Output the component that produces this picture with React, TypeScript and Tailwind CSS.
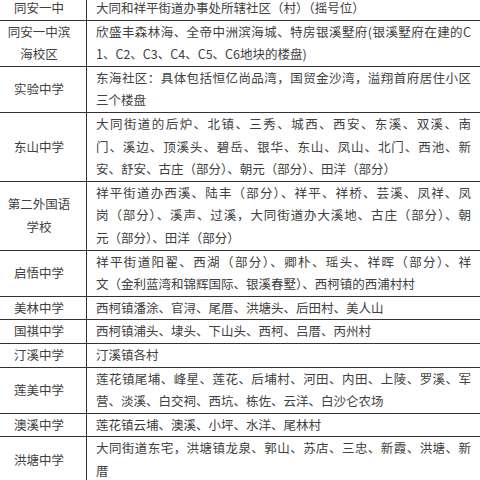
const rows: { name: string[]; lines: string[] }[] = [
  { name: ["同安一中"], lines: ["大同和祥平街道办事处所辖社区（村）（摇号位）"] },
  {
    name: ["同安一中滨", "海校区"],
    lines: ["欣盛丰森林海、全帝中洲滨海城、特房银溪墅府(银溪墅府在建的C", "1、C2、C3、C4、C5、C6地块的楼盘)"],
  },
  {
    name: ["实验中学"],
    lines: ["东海社区：具体包括恒亿尚品湾，国贸金沙湾，溢翔首府居住小区", "三个楼盘"],
  },
  {
    name: ["东山中学"],
    lines: [
      "大同街道的后炉、北镇、三秀、城西、西安、东溪、双溪、南",
      "门、溪边、顶溪头、碧岳、银华、东山、凤山、北门、西池、新",
      "安、舒安、古庄（部分）、朝元（部分）、田洋（部分）",
    ],
  },
  {
    name: ["第二外国语", "学校"],
    lines: [
      "祥平街道办西溪、陆丰（部分）、祥平、祥桥、芸溪、凤祥、凤",
      "岗（部分）、溪声、过溪，大同街道办大溪地、古庄（部分）、朝",
      "元（部分）、田洋（部分）",
    ],
  },
  {
    name: ["启悟中学"],
    lines: [
      "祥平街道阳翟、西湖（部分）、卿朴、瑶头、祥晖（部分）、祥",
      "文（金利蓝湾和锦辉国际、银溪春墅）、西柯镇的西浦村村",
    ],
  },
  { name: ["美林中学"], lines: ["西柯镇潘涂、官浔、尾厝、洪塘头、后田村、美人山"] },
  { name: ["国祺中学"], lines: ["西柯镇浦头、埭头、下山头、西柯、吕厝、丙州村"] },
  { name: ["汀溪中学"], lines: ["汀溪镇各村"] },
  {
    name: ["莲美中学"],
    lines: [
      "莲花镇尾埔、峰星、莲花、后埔村、河田、内田、上陵、罗溪、军",
      "营、淡溪、白交祠、西坑、栋佐、云洋、白沙仑农场",
    ],
  },
  { name: ["澳溪中学"], lines: ["莲花镇云埔、澳溪、小坪、水洋、尾林村"] },
  {
    name: ["洪塘中学"],
    lines: ["大同街道东宅，洪塘镇龙泉、郭山、苏店、三忠、新霞、洪塘、新", "厝"],
  },
];

export default function App() {
  return (
    <div className="h-[480px] w-[480px] overflow-hidden bg-white">
      <div
        className="-ml-[8px] -mt-[3px] w-[488px] text-[12.5px] leading-[22.6px] text-[#404040]"
        style={{ fontFamily: '"Noto Sans CJK SC", "Noto Sans", sans-serif' }}
      >
        {rows.map((row, i) => (
          <div key={i} className="flex border-b border-[#333]">
            <div className="flex w-[95px] shrink-0 flex-col items-center justify-center border-r border-[#333] text-center">
              {row.name.map((n, j) => (
                <div key={j}>{n}</div>
              ))}
            </div>
            <div className="flex-1 px-[9px]">
              {row.lines.map((l, j) =>
                j < row.lines.length - 1 ? (
                  <div key={j} className="whitespace-nowrap text-justify [text-align-last:justify]">
                    {l}
                  </div>
                ) : (
                  <div key={j} className="whitespace-nowrap">
                    {l}
                  </div>
                )
              )}
            </div>
          </div>
        ))}
      </div>
    </div>
  );
}
